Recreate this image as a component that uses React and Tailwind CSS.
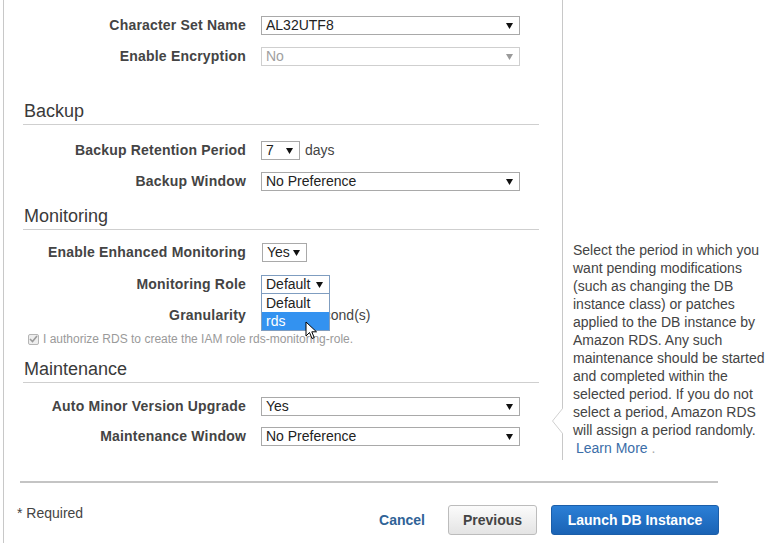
import React from "react";

function Caret({ color = "#111" }) {
    return (
        <svg width="7" height="6" viewBox="0 0 7 6" className="shrink-0">
            <polygon points="0,0 7,0 3.5,6" fill={color} />
        </svg>
    );
}

function Select({ value, w, disabled, focused }) {
    return (
        <div
            className={`h-[19px] ${w} flex items-center justify-between pl-[4px] pr-[6px] bg-white border text-[14px] leading-none ${
                disabled ? "border-[#cfcfcf] text-[#a0a0a0]" : focused ? "border-[#7f9dc0] text-[#222]" : "border-[#a9a9a9] text-[#222]"
            }`}
        >
            <span className="-mt-[1px]">{value}</span>
            <Caret color={disabled ? "#9a9a9a" : "#111"} />
        </div>
    );
}

function Row({ label, className = "", children }) {
    return (
        <div className={`flex items-center h-[19px] ${className}`}>
            <div className="w-[242px] text-right font-bold text-[14px] tracking-[0.2px] text-[#444] whitespace-nowrap">{label}</div>
            <div className="ml-[15px] flex items-center relative">{children}</div>
        </div>
    );
}

function Heading({ text, className = "" }) {
    return (
        <div className={`ml-[19px] w-[516px] border-b border-[#cfcfcf] pb-[2px] ${className}`}>
            <div className="text-[18px] leading-[22px] text-[#3a3a3a] pl-[1px]">{text}</div>
        </div>
    );
}

const help = [
    "Select the period in which you",
    "want pending modifications",
    "(such as changing the DB",
    "instance class) or patches",
    "applied to the DB instance by",
    "Amazon RDS. Any such",
    "maintenance should be started",
    "and completed within the",
    "selected period. If you do not",
    "select a period, Amazon RDS",
    "will assign a period randomly.",
];

export default function App() {
    return (
        <div className="w-[783px] h-[551px] bg-white overflow-hidden" style={{ fontFamily: '"Liberation Sans", Arial, sans-serif' }}>
            <div className="ml-[3px] h-[543px] border-l border-[#c8c8c8]">
                <div className="flex h-[460px]">
                    {/* form */}
                    <div className="w-[558px] pt-[16px]">
                        <Row label="Character Set Name">
                            <Select value="AL32UTF8" w="w-[259px]" />
                        </Row>
                        <Row label="Enable Encryption" className="mt-[12px]">
                            <Select value="No" w="w-[259px]" disabled />
                        </Row>

                        <Heading text="Backup" className="mt-[34px]" />
                        <Row label="Backup Retention Period" className="mt-[16px]">
                            <Select value="7" w="w-[39px]" />
                            <span className="ml-[5px] -mt-[1px] text-[14px] text-[#444]">days</span>
                        </Row>
                        <Row label="Backup Window" className="mt-[12px]">
                            <Select value="No Preference" w="w-[259px]" />
                        </Row>

                        <Heading text="Monitoring" className="mt-[14px]" />
                        <Row label="Enable Enhanced Monitoring" className="mt-[13px]">
                            <div className="ml-[1px]">
                                <Select value="Yes" w="w-[45px]" />
                            </div>
                        </Row>
                        <Row label="Monitoring Role" className="mt-[13px] relative z-10">
                            <Select value="Default" w="w-[69px]" focused />
                            {/* open dropdown list */}
                            <div className="absolute left-0 top-[18px] w-[69px] bg-white border border-[#7f9dc0] text-[14px] leading-[18px] text-[#222]">
                                <div className="pl-[4px] h-[18px]">Default</div>
                                <div className="pl-[4px] h-[18px] bg-[#3392f0] text-white">rds</div>
                                <svg width="13" height="19" viewBox="0 0 13 19" className="absolute left-[43px] top-[27px]">
                                    <path d="M1 1 L1 15 L4.5 11.5 L7 17.5 L9.2 16.6 L6.8 10.8 L11.5 10.8 Z" fill="#fff" stroke="#000" strokeWidth="1" strokeLinejoin="round" />
                                </svg>
                            </div>
                        </Row>
                        <Row label="Granularity" className="mt-[12px]">
                            <Select value="60" w="w-[43px]" />
                            <span className="ml-[5px] text-[14px] text-[#444]">second(s)</span>
                        </Row>
                        <div className="mt-[6px] ml-[24px] h-[16px] flex items-center">
                            <span className="w-[11px] h-[11px] border border-[#b5b5b5] bg-[#eee] rounded-[2px] flex items-center justify-center">
                                <svg width="9" height="8" viewBox="0 0 9 8">
                                    <path d="M1 4 L3.5 6.5 L8 1" fill="none" stroke="#9a9a9a" strokeWidth="1.6" />
                                </svg>
                            </span>
                            <span className="ml-[4px] text-[12px] text-[#9a9a9a] whitespace-nowrap">
                                I authorize RDS to create the IAM role rds-monitoring-role.
                            </span>
                        </div>

                        <Heading text="Maintenance" className="mt-[11px]" />
                        <Row label="Auto Minor Version Upgrade" className="mt-[14px]">
                            <Select value="Yes" w="w-[259px]" />
                        </Row>
                        <Row label="Maintenance Window" className="mt-[11px]">
                            <Select value="No Preference" w="w-[259px]" />
                        </Row>
                    </div>

                    {/* help panel */}
                    <div className="flex-1 border-l border-[#c8c8c8] relative">
                        <svg width="11" height="26" viewBox="0 0 11 26" className="absolute left-[-11px] top-[408px]">
                            <polygon points="11,0 0.5,13 11,26" fill="#fff" />
                            <polyline points="11,0 0.5,13 11,26" fill="none" stroke="#d0d0d0" strokeWidth="1" />
                        </svg>
                        <div className="pl-[10px] pt-[241px] text-[14px] leading-[18px] text-[#444] whitespace-nowrap">
                            {help.map((l) => (
                                <div key={l}>{l}</div>
                            ))}
                            <div className="pl-[3px]">
                                <span className="text-[#3b6ea8]">Learn More</span>
                                <span className="text-[#aaa]"> .</span>
                            </div>
                        </div>
                    </div>
                </div>

                {/* footer */}
                <div className="mt-[21px] ml-[16px] w-[698px] h-[2px] bg-[#c4c4c4]" />
                <div className="mt-[22px] flex items-start pr-[64px]">
                    <span className="ml-[13px] text-[14px] leading-[16px] text-[#444]">* Required</span>
                    <div className="flex-1" />
                    <button type="button" className="mt-[5px] font-bold text-[14px] text-[#2f6397]">Cancel</button>
                    <button
                        type="button"
                        className="ml-[23px] w-[89px] h-[30px] rounded-[3px] border border-[#bcbcbc] bg-gradient-to-b from-[#fbfbfb] to-[#e4e4e4] font-bold text-[14px] text-[#444]"
                    >
                        Previous
                    </button>
                    <button
                        type="button"
                        className="ml-[14px] w-[168px] h-[30px] rounded-[3px] border border-[#1b5ea9] bg-gradient-to-b from-[#2b7fd6] to-[#1a63b5] font-bold text-[14px] text-white"
                    >
                        Launch DB Instance
                    </button>
                </div>
            </div>
        </div>
    );
}
